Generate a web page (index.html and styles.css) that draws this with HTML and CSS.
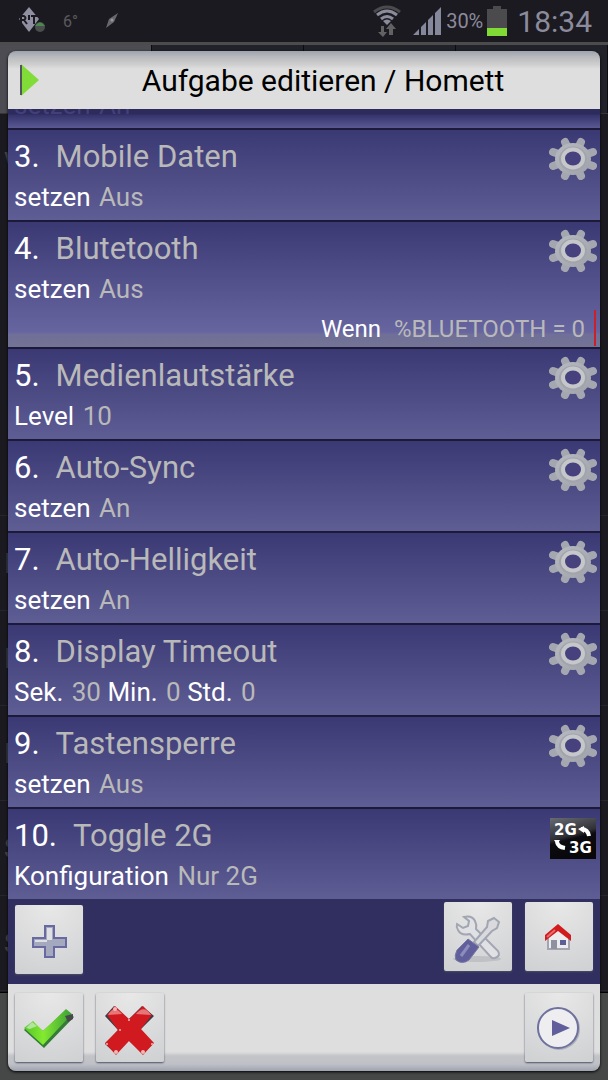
FILE: index.html
```html
<!DOCTYPE html>
<html lang="de">
<head>
<meta charset="utf-8">
<meta name="viewport" content="width=device-width, initial-scale=1">
<title>Aufgabe editieren / Homett</title>
<link rel="stylesheet" href="styles.css">
</head>
<body>
<svg class="defs" aria-hidden="true">
  <defs>
    <linearGradient id="gear-fill" x1="0" y1="0" x2="1" y2="1"><stop offset="0" stop-color="#b8bac1"/><stop offset="1" stop-color="#a0a2ab"/></linearGradient>
    <linearGradient id="check-fill" x1="0" y1="0" x2="1" y2="0"><stop offset="0" stop-color="#55c426"/><stop offset=".4" stop-color="#83ea31"/><stop offset="1" stop-color="#3b9e35"/></linearGradient>
    <linearGradient id="tile-fill" x1="0" y1="0" x2=".3" y2="1"><stop offset="0" stop-color="#686b72"/><stop offset=".5" stop-color="#303137"/><stop offset=".6" stop-color="#0c0c10"/><stop offset="1" stop-color="#08080b"/></linearGradient>
    <symbol id="gear" viewBox="0 0 48 44">
      <path d="M16 6L32 40M32 6L16 40M4 16L44 30M44 16L4 30" stroke="#a5a7b0" stroke-width="8" stroke-linecap="round"/>
      <ellipse cx="24" cy="23" rx="18" ry="16" fill="url(#gear-fill)"/>
      <ellipse cx="24" cy="23" rx="14" ry="12.500" fill="#a2a4ac"/>
      <ellipse cx="24" cy="22.500" rx="10" ry="9" fill="#47427e" stroke="#c6c7ca" stroke-width="4"/>
    </symbol>
  </defs>
</svg>
<div class="screen">
  <header class="status">
    <svg class="rit" viewBox="0 0 28 28" aria-hidden="true">
      <path d="M10 0L20 12L10 25L0 12Z" fill="#9090a2"/>
      <path d="M2 17V9H5Q8 11 5 13H2M5 13L8 17M10 8V13M12 9H19M15 9V17" fill="none" stroke="#1b1a20" stroke-width="2"/>
      <circle cx="21" cy="20" r="5" fill="#4a4f4e"/><path d="M16 19Q21 12 26 19Z" fill="#4b8a4c"/>
    </svg>
    <span class="temp">6°</span>
    <svg class="compass" viewBox="0 0 14 16" aria-hidden="true"><path d="M13 0L9 9L1 15L4 6Z" fill="#68686c"/><circle cx="7" cy="7" r="1.500" fill="#99999d"/></svg>
    <span class="spacer"></span>
    <svg class="wifi" viewBox="0 0 28 32" aria-hidden="true">
      <g fill="none" stroke-width="3"><path d="M1 7Q14-3 27 7" stroke="#4b4b4e"/><path d="M4 10Q14 2 24 10M8 14Q14 9 20 14" stroke="#8b8b9c"/></g>
      <path d="M10 16Q14 13 18 16L14 20Z" fill="#8b8b9c"/>
      <path d="M8 21V27H5L10 32L14 27H11V21ZM16 30V24H13L18 18L23 24H20V30Z" fill="#626265"/>
    </svg>
    <svg class="signal" viewBox="0 0 28 28" aria-hidden="true"><path d="M0 28L6 22V28ZM8 20L13 15V28H8ZM15 13L20 8V28H15ZM22 6L28 0V28H22Z" fill="#85879b"/></svg>
    <span class="percent">30%</span>
    <svg class="battery" viewBox="0 0 20 30" aria-hidden="true"><path d="M6 0H14V3H20V30H0V3H6Z" fill="#4b4b4d"/><path d="M0 22H20V30H0Z" fill="#80dc35"/></svg>
    <time class="clock">18:34</time>
  </header>

  <div class="stage">
    <div class="behind" aria-hidden="true">
      <div class="behind-tabs"><i></i><i></i><i></i><i></i></div>
      <div class="behind-list"><span>w</span><span>I</span><span>I</span><span>I</span><span>S</span><span>S</span></div>
      <div class="behind-foot"></div>
    </div>

    <main class="dialog">
      <div class="title-bar">
        <svg class="play" viewBox="0 0 20 34" aria-hidden="true"><path d="M1 1V33L19 17Z" fill="#82dc38"/><path d="M1 2V32" stroke="#50565a" stroke-width="2"/></svg>
        <h1>Aufgabe editieren / Homett</h1>
      </div>

      <ol class="actions">
        <li class="row cut"><p class="detail">setzen <span>An</span></p></li>
        <li class="row"><div class="text"><h2><b>3.</b>Mobile Daten</h2><p class="detail">setzen <span>Aus</span></p></div><svg class="icon"><use href="#gear"/></svg></li>
        <li class="row tall"><div class="text"><h2><b>4.</b>Blutetooth</h2><p class="detail">setzen <span>Aus</span></p></div><svg class="icon"><use href="#gear"/></svg>
          <p class="condition">Wenn <span>%BLUETOOTH = 0</span></p></li>
        <li class="row"><div class="text"><h2><b>5.</b>Medienlautstärke</h2><p class="detail">Level <span>10</span></p></div><svg class="icon"><use href="#gear"/></svg></li>
        <li class="row"><div class="text"><h2><b>6.</b>Auto-Sync</h2><p class="detail">setzen <span>An</span></p></div><svg class="icon"><use href="#gear"/></svg></li>
        <li class="row"><div class="text"><h2><b>7.</b>Auto-Helligkeit</h2><p class="detail">setzen <span>An</span></p></div><svg class="icon"><use href="#gear"/></svg></li>
        <li class="row"><div class="text"><h2><b>8.</b>Display Timeout</h2><p class="detail">Sek. <span>30</span> Min. <span>0</span> Std. <span>0</span></p></div><svg class="icon"><use href="#gear"/></svg></li>
        <li class="row"><div class="text"><h2><b>9.</b>Tastensperre</h2><p class="detail">setzen <span>Aus</span></p></div><svg class="icon"><use href="#gear"/></svg></li>
        <li class="row"><div class="text"><h2><b>10.</b>Toggle 2G</h2><p class="detail">Konfiguration <span>Nur 2G</span></p></div>
          <svg class="icon" viewBox="0 0 48 44" role="img" aria-label="2G 3G">
            <rect x="1" y="3" width="46" height="41" fill="url(#tile-fill)"/>
            <text class="tile-text" x="5" y="20">2G</text><text class="tile-text" x="20" y="38">3G</text>
            <path d="M32 14Q39 14 40 21M8 27Q9 32 16 33" fill="none" stroke="#fff" stroke-width="4"/><path d="M29 14L35 11V18ZM5 25L11 25L8 30Z" fill="#fff"/>
          </svg></li>
      </ol>

      <div class="tools">
        <button class="tile low" type="button" aria-label="Hinzufügen"><svg viewBox="0 0 68 68"><path d="M30 20H39V32H51V41H39V51H30V41H18V32H30Z" fill="#a5a9bd" stroke="#6869a0" stroke-width="2"/><path d="M32 22H37V34H32ZM20 34H32V36H20Z" fill="#dfe0e4"/></svg></button>
        <span class="spacer"></span>
        <button class="tile" type="button" aria-label="Werkzeuge"><svg viewBox="0 0 68 68">
          <ellipse cx="33" cy="56" rx="24" ry="3" fill="#c0c1c4"/>
          <path d="M20 14Q28 12 31 18Q33 22 32 26L54 48Q57 53 51 55Q48 56 46 53L26 31Q17 33 14 27Q12 24 13 21L19 25L24 23L25 18Z" fill="#e0e1e4" stroke="#a2a5b2" stroke-width="2"/>
          <path d="M50 15L55 19L53 25L48 28L34 43L30 39L43 24L44 18Z" fill="#d9dade" stroke="#a2a5b2" stroke-width="2"/>
          <path d="M24 36L35 44L25 57Q18 62 12 57Q10 53 13 47Z" fill="#605f9b" stroke="#7779a5"/><path d="M25 42L17 53" stroke="#8c8dbd" stroke-width="3"/>
        </svg></button>
        <button class="tile" type="button" aria-label="Startseite"><svg viewBox="0 0 68 68">
          <path d="M23 33L33 25L44 33V46H23Z" fill="#ececee" stroke="#a2a4ae" stroke-width="2"/><path d="M26 37H32V46H26Z" fill="#8d91a0"/><path d="M35 37H41V42H35Z" fill="#5c5e96"/>
          <path d="M20 32L33 21L46 32V38L33 28L20 38Z" fill="#d21b1f"/><path d="M22 34L30 27" stroke="#e86e6e" stroke-width="2"/>
        </svg></button>
      </div>

      <footer class="foot">
        <button class="tile" type="button" aria-label="Übernehmen"><svg viewBox="0 0 68 68">
          <path d="M9 36L17 28L28 37L51 16L59 23L29 54Z" fill="#347c37"/><path d="M9 34L18 27L28 37L51 15L57 20L28 51Z" fill="url(#check-fill)"/><path d="M11 34L17 28L22 32L15 35Z" fill="#c4e8bb" opacity=".8"/>
          <path d="M50 22L58 20V25L53 28Z" fill="#45494a"/>
        </svg></button>
        <button class="tile" type="button" aria-label="Abbrechen"><svg viewBox="0 0 68 68">
          <path d="M9 22L18 12L32 26L46 12L58 22L44 36L57 50L47 59L32 46L20 60L9 50L22 36Z" fill="#3a3c45"/>
          <path d="M11 21L19 12L33 25L47 12L56 21L45 35L58 49L47 61L33 47L20 61L9 49L22 36Z" fill="#d11a20"/><path d="M12 21Q18 10 26 20ZM40 20Q48 10 55 21Z" fill="#e67779"/>
          <g fill="#f1b7b8"><circle cx="19" cy="15" r="2"/><circle cx="33" cy="26" r="1"/><circle cx="24" cy="36" r="1"/><circle cx="11" cy="50" r="1"/><circle cx="20" cy="58" r="2"/><circle cx="47" cy="58" r="2"/><circle cx="56" cy="50" r="1"/></g>
        </svg></button>
        <span class="spacer"></span>
        <button class="tile" type="button" aria-label="Abspielen"><svg viewBox="0 0 68 68"><circle cx="34" cy="35" r="20" fill="none" stroke="#adb0bb" stroke-width="2"/><circle cx="33" cy="34" r="20" fill="#eeeef0" stroke="#6f719e" stroke-width="2"/><path d="M27 26V42L45 34Z" fill="#605f9b"/></svg></button>
      </footer>
    </main>
  </div>
</div>
</body>
</html>
```
FILE: styles.css
```css
* { box-sizing: border-box; }

body {
  margin: 0;
  background: #1b1a20;
  font-family: Roboto, "Noto Sans", sans-serif;
}

h1, h2, p, ol { margin: 0; padding: 0; font-weight: 400; }
ol { list-style: none; }
.defs { position: absolute; width: 0; height: 0; }
.spacer { flex: 1; }

.screen {
  display: flex;
  flex-direction: column;
  min-height: 100vh;
}

/* Status bar */
.status {
  display: flex;
  align-items: center;
  height: 42px;
  padding: 0 16px 0 19px;
  color: #8b8b9c;
}
.rit { width: 28px; height: 28px; }
.temp { margin-left: 16px; font-size: 16px; color: #5a5a5e; }
.compass { width: 14px; height: 16px; margin-left: 27px; }
.wifi { width: 28px; height: 32px; margin-right: 12px; }
.signal { width: 28px; height: 28px; margin-right: 5px; }
.percent { margin-right: 4px; font-size: 20px; }
.battery { width: 20px; height: 30px; margin-right: 10px; }
.clock { font-size: 30px; }

/* Dimmed screen and the dialog share one grid cell */
.stage { display: grid; flex: 1; }
.behind, .dialog { grid-area: 1 / 1; }
.behind {
  display: flex;
  flex-direction: column;
  overflow: hidden;
  color: #46464a;
  font-size: 28px;
}
.behind-tabs {
  display: grid;
  grid-template-columns: repeat(4, 1fr);
  height: 72px;
  background: #22222a;
  border-top: 3px solid #4c4c4d;
  border-bottom: 1px solid #35353a;
}
.behind-tabs i { border-right: 1px solid #0c0c10; }
.behind-tabs i:first-child { background: #4c4c52; }
.behind-list { flex: 1; }
.behind-list span {
  display: block;
  height: 95px;
  padding-left: 4px;
  line-height: 96px;
  border-bottom: 1px solid #25252b;
}
.behind-list span:first-child { height: 402px; line-height: 88px; }
.behind-foot {
  height: 88px;
  background: #464747;
  border-top: 1px solid #000;
}

/* Dialog */
.dialog {
  display: flex;
  flex-direction: column;
  align-self: start;
  margin: 9px 8px;
  overflow: hidden;
  border-radius: 8px;
  box-shadow: 0 1px 3px #000;
}
.title-bar {
  display: flex;
  align-items: center;
  height: 58px;
  padding: 0 12px;
  background: linear-gradient(#9da3ae, #b9babd 6px, #d0d0d0 14px, #dedede 18px);
  color: #000;
}
.play { width: 20px; height: 34px; }
.title-bar h1 { flex: 1; padding: 2px 0 0 18px; font-size: 30px; line-height: 40px; text-align: center; }

.row {
  display: flex;
  flex-wrap: wrap;
  justify-content: space-between;
  align-items: flex-start;
  padding: 6px 3px 4px 6px;
  border-top: 2px solid #1c1a38;
  background: linear-gradient(#3b3974, #5e5d94);
  color: #fff;
}
.row.tall { padding-bottom: 0; background: linear-gradient(#3b3974, #6765a0 88%, #6f6f98 90%, #737494); }
.row.cut {
  flex-wrap: nowrap;
  align-items: flex-end;
  height: 19px;
  border-top: 0;
  overflow: hidden;
  background: linear-gradient(#2d2a5c 5px, #35336c 6px, #5b5993);
}
.row.cut .detail, .row.cut .detail span { color: #423f7a; }
.row h2 { font-size: 31px; line-height: 42px; color: #b9b9b9; }
.row b { margin-right: 16px; font-weight: 400; color: #fff; }
.detail { font-size: 26px; line-height: 38px; }
.detail span, .condition span { color: #b9b9b9; }
.detail span { padding-left: 2px; }
.condition {
  flex-basis: 100%;
  padding: 2px 9px 0 0;
  margin: 2px 1px 1px 0;
  border-right: 2px solid #c9202c;
  font-size: 24px;
  line-height: 34px;
  text-align: right;
}
.condition span { padding-left: 7px; }
.icon { width: 48px; height: 44px; }
.tile-text { font: 700 15px "DejaVu Sans", sans-serif; fill: #fff; }

.tools {
  display: flex;
  align-items: flex-start;
  gap: 13px;
  height: 85px;
  padding: 3px 7px 0;
  background: #312f60;
}
.foot {
  display: flex;
  align-items: center;
  gap: 13px;
  height: 87px;
  padding: 0 7px;
  background: linear-gradient(#dedede 68px, #c2c4c8 72px, #bfc1c7 80px, #9fa3b0);
}
.tile {
  width: 68px;
  height: 69px;
  padding: 0;
  border: 0;
  border-radius: 2px;
  background: radial-gradient(circle at 50% 0, #e8e8e8, #cfd0d2);
  box-shadow: 0 1px 2px #4b4f62;
}
.tile.low { margin-top: 3px; }
.tile svg { display: block; width: 68px; height: 68px; }
```
